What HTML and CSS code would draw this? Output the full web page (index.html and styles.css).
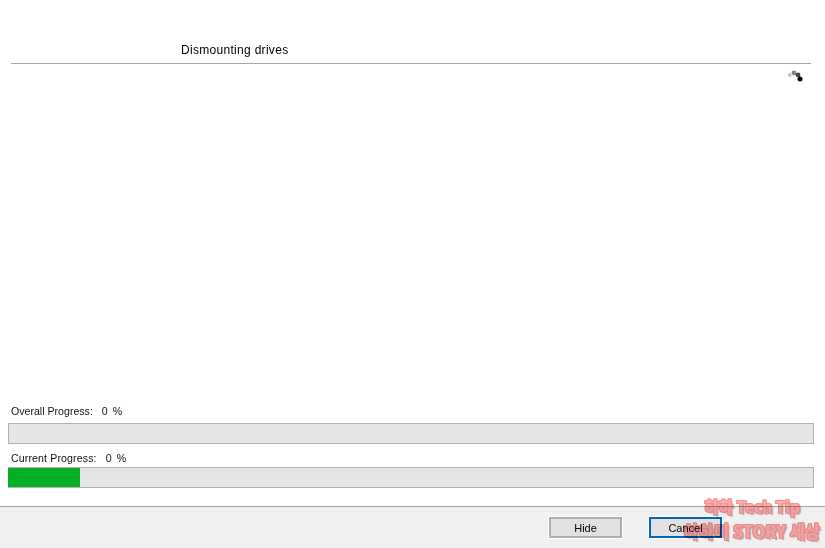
FILE: index.html
```html
<!DOCTYPE html>
<html>
<head>
  <title>Dismounting drives</title>
  <link rel="stylesheet" href="styles.css">
</head>
<body>
  <div class="window">
    <header class="head">
      <h1 class="title">Dismounting drives</h1>
    </header>

    <section class="log">
      <svg class="spinner" width="16" height="12" viewBox="0 0 16 12">
        <circle cx="1.8" cy="5" r="2" fill="#c4c4c4"/>
        <circle cx="6" cy="3" r="2.4" fill="#858585"/>
        <circle cx="10" cy="5" r="2.4" fill="#454545"/>
        <circle cx="12" cy="9" r="2.5" fill="#000"/>
      </svg>
    </section>

    <section class="progress">
      <div class="label overall-label"><span>Overall Progress:</span><span class="pct">0 %</span></div>
      <div class="bar"></div>
      <div class="label current-label"><span>Current Progress:</span><span class="pct">0 %</span></div>
      <div class="bar"><div class="fill" style="width: 72px"></div></div>
    </section>

    <footer class="foot">
      <button class="btn">Hide</button>
      <button class="btn btn-default">Cancel</button>
    </footer>

    <div class="watermark">
      <div class="mark-top">하하 Tech Tip</div>
      <div class="mark-bottom">하하미 STORY 세상</div>
    </div>
  </div>
</body>
</html>
```

FILE: styles.css
```css
* {
  box-sizing: border-box;
}
html, body {
  margin: 0;
  padding: 0;
}
body {
  background-color: white;
  color: black;
  font-family: Tahoma, "Liberation Sans", sans-serif;
  font-size: 10.6px;
  overflow: hidden;
}
.window {
  position: relative;
  width: 825px;
  height: 548px;
  display: flex;
  flex-direction: column;
}
.head {
  height: 64px;
  margin: 0 14px 0 11px;
  padding: 43px 0 0 170px;
  border-bottom: 1px solid #a8a8a8;
}
.title {
  margin: 0;
  font-size: 12px;
  font-weight: normal;
  line-height: 15px;
  letter-spacing: 0.3px;
}
.log {
  height: 340px;
  display: flex;
  justify-content: flex-end;
  align-items: flex-start;
  padding: 6px 21px 0 0;
}
.progress {
  height: 102px;
  padding: 0 11px 0 8px;
}
.label {
  display: flex;
  gap: 9px;
  padding-left: 3px;
  line-height: 14px;
  color: #10101a;
}
.pct {
  word-spacing: 2px;
}
.overall-label {
  height: 19px;
}
.current-label {
  height: 23px;
  padding-top: 7px;
  letter-spacing: 0.12px;
}
.bar {
  height: 21px;
  background-color: #e6e6e6;
  border: 1px solid #b0b0b0;
}
.fill {
  height: 100%;
  margin-left: -1px;
  background-color: #06b025;
}
.foot {
  height: 42px;
  background-color: #f0f0f0;
  border-top: 1px solid #a0a0a0;
  display: flex;
  justify-content: flex-end;
  gap: 27px;
  padding: 10px 103px 0 0;
}
.btn {
  width: 73px;
  height: 21px;
  padding: 0;
  background-color: #e1e1e1;
  border: 2px solid #adadad;
  outline: 1px solid white;
  font-family: inherit;
  font-size: 11px;
  color: black;
}
.btn-default {
  border-color: #0067c0;
}
.watermark {
  position: absolute;
  right: 5px;
  bottom: 5px;
  display: flex;
  flex-direction: column;
  align-items: flex-end;
  font-family: "Noto Sans CJK KR", "Liberation Sans", sans-serif;
  font-weight: bold;
  color: #fbb0b0;
  mix-blend-mode: multiply;
  text-shadow: 1px 0 0 #f79292, -1px 0 0 #f79292, 0 1px 0 #f79292, 0 -1px 0 #f79292,
    1px 1px 0 #f79292, -1px -1px 0 #f79292, 1px -1px 0 #f79292, -1px 1px 0 #f79292,
    2px 2px 1px #c4bcc4;
}
.mark-top {
  font-size: 15.5px;
  line-height: 25px;
  margin-right: 20px;
}
.mark-bottom {
  font-size: 16.5px;
  line-height: 24px;
}
```
